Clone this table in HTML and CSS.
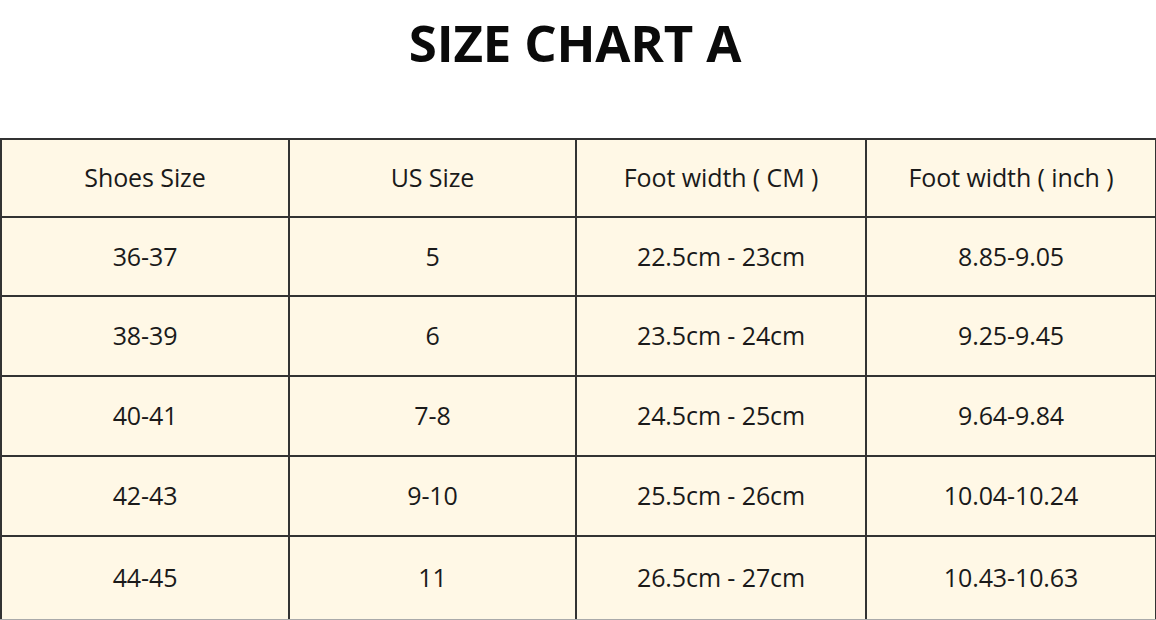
FILE: index.html
```html
<!DOCTYPE html>
<html>
<head>
<meta charset="utf-8">
<link rel="stylesheet" href="styles.css">
</head>
<body>
<div class="page">
  <h1 class="title">SIZE CHART A</h1>
  <table class="chart">
    <colgroup>
      <col class="c1"><col class="c2"><col class="c3"><col class="c4">
    </colgroup>
    <tr class="r-head"><td>Shoes Size</td><td>US Size</td><td>Foot width ( CM )</td><td>Foot width ( inch )</td></tr>
    <tr class="r1"><td>36-37</td><td>5</td><td>22.5cm - 23cm</td><td>8.85-9.05</td></tr>
    <tr class="r2"><td>38-39</td><td>6</td><td>23.5cm - 24cm</td><td>9.25-9.45</td></tr>
    <tr class="r2"><td>40-41</td><td>7-8</td><td>24.5cm - 25cm</td><td>9.64-9.84</td></tr>
    <tr class="r2"><td>42-43</td><td>9-10</td><td>25.5cm - 26cm</td><td>10.04-10.24</td></tr>
    <tr class="r-last"><td>44-45</td><td>11</td><td>26.5cm - 27cm</td><td>10.43-10.63</td></tr>
  </table>
</div>
</body>
</html>
```
FILE: styles.css
```css
html, body {
  margin: 0;
  padding: 0;
  background: #ffffff;
}
.page {
  width: 1156px;
  height: 620px;
  overflow: hidden;
  font-family: "Open Sans", "Liberation Sans", sans-serif;
  color: #1a1a1a;
}
.title {
  margin: 0;
  height: 138px;
  padding-top: 12px;
  padding-right: 6px;
  box-sizing: border-box;
  text-align: center;
  font-size: 51px;
  font-weight: 700;
  line-height: 60px;
  color: #0a0a0a;
  letter-spacing: -0.2px;
}
.chart {
  border-collapse: collapse;
  table-layout: fixed;
  width: 1155px;
  background: #fff8e6;
}
.c1 { width: 288px; }
.c2 { width: 287px; }
.c3 { width: 290px; }
.c4 { width: 290px; }
.chart td {
  border: 2px solid #333333;
  text-align: center;
  vertical-align: middle;
  font-size: 25px;
  line-height: 30px;
  padding: 0 0 2px;
  letter-spacing: -0.1px;
}
.r-head td { height: 74px; }
.r1 td { height: 75px; }
.r2 td { height: 76px; }
.r-last td { height: 80px; border-bottom-color: #aaaaaa; }
```
